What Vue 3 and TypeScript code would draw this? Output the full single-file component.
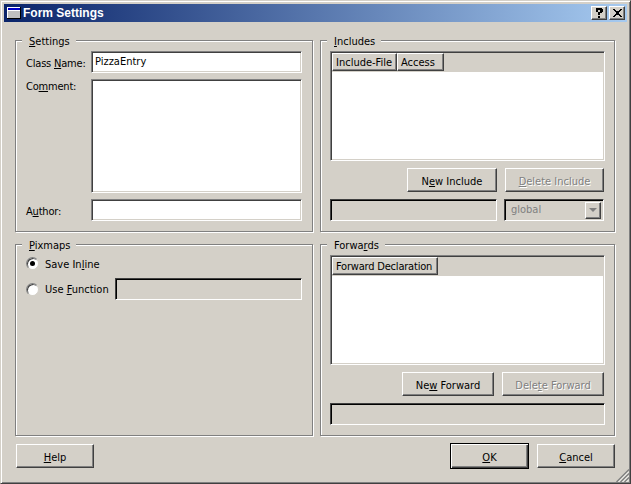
<script setup lang="ts">
const includeCols = [
  { label: 'Include-File', width: 65 },
  { label: 'Access', width: 47 },
]
const forwardCols = [{ label: 'Forward Declaration', width: 106 }]
</script>

<template>
  <div class="window">
    <div class="titlebar">
      <svg class="appicon" width="14" height="12" viewBox="0 0 14 12">
        <rect x="0" y="0" width="14" height="12" fill="#000" />
        <rect x="0" y="0" width="13" height="11" fill="#fff" />
        <rect x="1" y="1" width="12" height="10" fill="#c0c0c0" />
        <rect x="1" y="1" width="12" height="2" fill="#0000c8" />
        <rect x="1" y="3" width="12" height="1" fill="#fff" />
      </svg>
      <span class="title">Form Settings</span>
      <span class="spacer"></span>
      <button class="capbtn help-cap" type="button">
        <svg width="8" height="10" viewBox="0 0 8 10"><path d="M1 0h6v1h1v3H7v1H5v2H3V4h2V2H3v2H1V1h0zM3 8h2v2H3z" fill="#000" /></svg>
      </button>
      <button class="capbtn" type="button">
        <svg width="9" height="8" viewBox="0 0 9 8"><path d="M0 0h2v1h1v1h3V1h1V0h2v1H8v1H7v1H6v2h1v1h1v1h1v1H7V7H6V6H3v1H2v1H0V7h1V6h1V5h1V3H2V2H1V1H0z" fill="#000" /></svg>
      </button>
    </div>

    <div class="body">
      <section class="group settings">
        <span class="legend"><u>S</u>ettings</span>
        <div class="row">
          <label class="lbl">Class <u>N</u>ame:</label>
          <div class="field white short">PizzaEntry</div>
        </div>
        <div class="row grow">
          <label class="lbl top">Co<u>m</u>ment:</label>
          <div class="field white tall"></div>
        </div>
        <div class="row">
          <label class="lbl">A<u>u</u>thor:</label>
          <div class="field white short"></div>
        </div>
      </section>

      <section class="group includes">
        <span class="legend"><u>I</u>ncludes</span>
        <div class="list">
          <div class="listhead">
            <span v-for="c in includeCols" :key="c.label" class="col" :style="{ width: c.width + 'px' }">{{ c.label }}</span>
          </div>
        </div>
        <div class="btnrow">
          <button class="btn b-ni" type="button">N<u>e</u>w Include</button>
          <button class="btn off b-di" type="button"><u>D</u>elete Include</button>
        </div>
        <div class="editrow inc">
          <div class="field short flexfield disabled"></div>
          <div class="field short combo disabled">
            <span class="off-text">global</span>
            <span class="arrow"><i></i></span>
          </div>
        </div>
      </section>

      <section class="group pixmaps">
        <span class="legend"><u>P</u>ixmaps</span>
        <div class="radio first">
          <span class="dot on"></span>
          <span class="radiolabel">Save In<u>l</u>ine</span>
        </div>
        <div class="radio second">
          <span class="dot"></span>
          <span class="uselabel">Use <u>F</u>unction</span>
          <div class="field short flexfield disabled"></div>
        </div>
      </section>

      <section class="group forwards">
        <span class="legend">Forwa<u>r</u>ds</span>
        <div class="list">
          <div class="listhead">
            <span v-for="c in forwardCols" :key="c.label" class="col" :style="{ width: c.width + 'px' }">{{ c.label }}</span>
          </div>
        </div>
        <div class="btnrow">
          <button class="btn b-nf" type="button">Ne<u>w</u> Forward</button>
          <button class="btn off b-df" type="button">Dele<u>t</u>e Forward</button>
        </div>
        <div class="editrow">
          <div class="field short flexfield disabled"></div>
        </div>
      </section>
    </div>

    <div class="footer">
      <button class="btn b-foot" type="button"><u>H</u>elp</button>
      <span class="spacer"></span>
      <button class="btn b-foot default" type="button"><u>O</u>K</button>
      <button class="btn b-foot" type="button"><u>C</u>ancel</button>
    </div>

    <svg class="grip" width="13" height="13" viewBox="0 0 13 13">
      <path d="M13 0.5L0.5 13M13 4.5L4.5 13M13 8.5L8.5 13" stroke="#808080" stroke-width="1.4" fill="none" />
      <path d="M13 2.5L2.5 13M13 6.5L6.5 13M13 10.5L10.5 13" stroke="#fff" stroke-width="0.8" fill="none" />
    </svg>
  </div>
</template>

<style>
html, body { margin: 0; background: #d4d0c8; }
</style>

<style scoped>
* { box-sizing: border-box; }
.window {
  position: relative;
  width: 631px;
  height: 484px;
  background: #d4d0c8;
  font-family: "DejaVu Sans Condensed", "DejaVu Sans", sans-serif;
  font-stretch: condensed;
  font-size: 11px;
  color: #000;
  border: 1px solid;
  border-color: #d4d0c8 #404040 #404040 #d4d0c8;
  box-shadow: inset 1px 1px 0 #fff, inset -1px -1px 0 #808080;
  overflow: hidden;
  display: flex;
  flex-direction: column;
  padding: 3px;
}
.titlebar {
  height: 18px;
  flex: none;
  display: flex;
  align-items: center;
  padding: 0 2px 0 3px;
  background: linear-gradient(90deg, #0a246a, #a6caf0);
  color: #fff;
}
.appicon { margin-right: 2px; flex: none; }
.title { font-family: "Liberation Sans", Arial, sans-serif; font-stretch: normal; font-weight: 700; font-size: 12px; }
.spacer { flex: 1; }
.capbtn, .btn {
  appearance: none;
  margin: 0;
  font: inherit;
  color: #000;
  background: #d4d0c8;
  border: 1px solid;
  border-color: #fff #404040 #404040 #fff;
  box-shadow: inset -1px -1px 0 #808080;
}
.capbtn {
  width: 16px;
  height: 14px;
  padding: 0;
  display: flex;
  align-items: center;
  justify-content: center;
}
.help-cap { margin-right: 2px; }
.body {
  margin: 18px 0 0 11px;
  width: 600px;
  display: grid;
  grid-template-columns: 298px 295px;
  grid-template-rows: 192px 192px;
  column-gap: 7px;
  row-gap: 12px;
}
.group {
  position: relative;
  border: 1px solid #808080;
  box-shadow: inset 1px 1px 0 #fff, 1px 1px 0 #fff;
  display: flex;
  flex-direction: column;
}
.legend {
  position: absolute;
  top: -6px;
  left: 6px;
  padding: 0 6px 0 7px;
  background: #d4d0c8;
  line-height: 13px;
}
.settings { padding: 10px; gap: 6px; }
.row { display: flex; align-items: center; }
.row.grow { flex: 1; align-items: stretch; }
.lbl { width: 65px; flex: none; white-space: nowrap; letter-spacing: -0.2px; padding-top: 2px; }
.lbl.top { line-height: 13px; padding-top: 1px; }
.field {
  border: 1px solid;
  border-color: #808080 #fff #fff #808080;
  box-shadow: inset 1px 1px 0 #404040, inset -1px -1px 0 #d4d0c8;
}
.field.disabled {
  border-color: #404040 #fff #fff #404040;
  box-shadow: inset 1px 1px 0 #000;
}
.white { background: #fff; flex: 1; }
.short { height: 22px; line-height: 17px; padding: 1px 3px; }
.tall { height: auto; }
.list {
  height: 110px;
  margin: 10px 9px 0 9px;
  background: #fff;
  border: 1px solid;
  border-color: #808080 #fff #fff #808080;
  box-shadow: inset 1px 1px 0 #404040, inset -1px -1px 0 #d4d0c8;
  padding: 1px;
  flex: none;
}
.listhead {
  display: flex;
  height: 19px;
  background: #d4d0c8;
}
.col {
  background: #d4d0c8;
  border: 1px solid;
  border-color: #fff #404040 #404040 #fff;
  box-shadow: inset -1px -1px 0 #808080;
  height: 18px;
  padding: 1px 0 0 3px;
  line-height: 16px;
  white-space: nowrap;
}
.forwards .col { letter-spacing: -0.2px; }
.btnrow {
  display: flex;
  justify-content: flex-end;
  margin: 7px 10px 0 0;
  gap: 8px;
}
.btn { height: 24px; padding: 2px 0 0; white-space: nowrap; }
.b-ni { width: 90px; }
.b-di { width: 99px; }
.b-nf { width: 92px; }
.b-df { width: 102px; }
.off, .off-text { color: #808080; text-shadow: 1px 1px 0 #fff; }
.off-text { text-shadow: none; flex: 1; padding-left: 4px; line-height: 16px; }
.editrow {
  display: flex;
  margin: 7px 9px 0 9px;
  gap: 7px;
}
.editrow.inc { margin-right: 10px; }
.flexfield { flex: 1; }
.combo {
  width: 100px;
  flex: none;
  display: flex;
  align-items: center;
  padding: 2px;
}
.arrow {
  width: 16px;
  height: 17px;
  background: #d4d0c8;
  border: 1px solid;
  border-color: #fff #404040 #404040 #fff;
  box-shadow: inset -1px -1px 0 #808080;
  display: flex;
  align-items: center;
  justify-content: center;
}
.arrow i {
  width: 0;
  height: 0;
  border: 4px solid transparent;
  border-top-color: #808080;
  border-bottom: 0;
}
.radio { display: flex; align-items: center; margin-left: 10px; margin-right: 10px; height: 22px; }
.radio.first { margin-top: 7px; }
.radio.second { margin-top: 4px; }
.radiolabel { padding-top: 2px; }
.dot {
  width: 13px;
  height: 13px;
  flex: none;
  border-radius: 50%;
  background: #fff;
  border: 1px solid;
  border-color: #808080 #d4d0c8 #d4d0c8 #808080;
  box-shadow: inset 1px 1px 0 #404040;
  margin-right: 6px;
  position: relative;
}
.dot.on::after {
  content: "";
  position: absolute;
  left: 3px;
  top: 3px;
  width: 5px;
  height: 5px;
  border-radius: 50%;
  background: #000;
}
.uselabel { white-space: nowrap; width: 70px; flex: none; }
.footer {
  display: flex;
  align-items: center;
  height: 26px;
  margin: 7px 12px 0 12px;
  gap: 8px;
}
.b-foot { width: 78px; }
.b-foot.default {
  width: 79px;
  height: 26px;
  border-color: #000;
  box-shadow: inset 1px 1px 0 #fff, inset -1px -1px 0 #404040, inset -2px -2px 0 #808080;
}
.grip { position: absolute; right: 1px; bottom: 1px; }
</style>
